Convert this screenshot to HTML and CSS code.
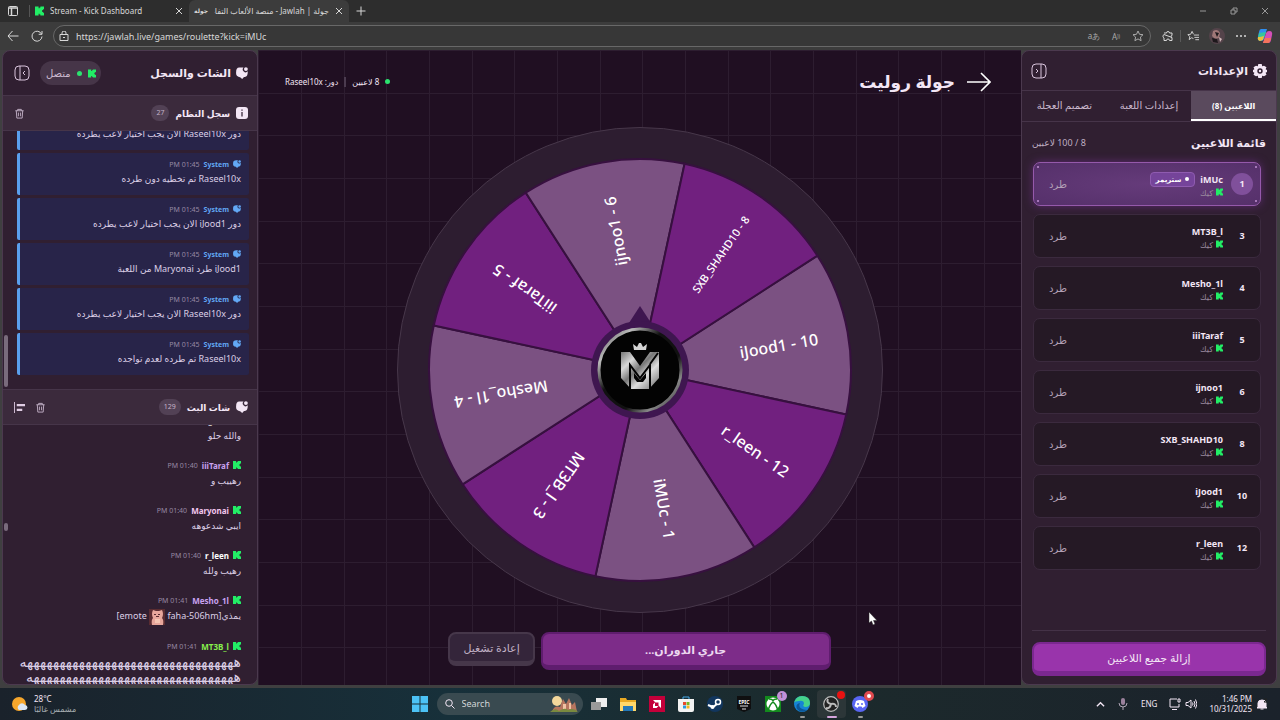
FILE: index.html
```html
<!DOCTYPE html>
<html lang="ar">
<head>
    <meta charset="UTF-8">
    <meta name="viewport" content="width=device-width, initial-scale=1.0">
    <title>جولة | Jawlah - منصة الألعاب التفاعلية</title>
    <link rel="stylesheet" href="styles.css">
</head>
<body>
    <!-- shared icons -->
    <svg class="sprite" aria-hidden="true">
        <symbol id="kick" viewBox="0 0 10 10"><path fill="currentColor" d="M0 0h4v2h1V1h1V0h4v3H9v1H8v2h1v1h1v3H6V9H5V8H4v2H0z"/></symbol>
        <symbol id="chat" viewBox="0 0 12 12"><path fill="currentColor" d="M7.500 .6A2.600 2.600 0 0 0 11.700 4.300C11.900 7 11.300 9.300 9.500 9.700C8.400 9.900 7.600 9.900 7 11.200Q6 12.500 5 11C4.500 10 3.600 10 2.400 9.700C.4 9.200 0 7.500 .1 5.200C.2 2 1 .8 3.300.6C4.700.4 5.800.4 7.500 .6z"/><circle cx="9.900" cy="2.100" r="1.900" fill="currentColor"/></symbol>
        <symbol id="trash" viewBox="0 0 12 12"><path fill="none" stroke="currentColor" d="M1.500 3h9M4 3V1.500h4V3M2.500 3l.6 8h5.800l.6-8M4.800 5v4M7.200 5v4"/></symbol>
        <symbol id="panel" viewBox="0 0 16 16"><rect x="1" y="1" width="14" height="14" rx="4" fill="none" stroke="currentColor"/><path d="M6 1v14M11 6L9 8l2 2" fill="none" stroke="currentColor"/></symbol>
        <symbol id="close" viewBox="0 0 8 8"><path d="M1 1l6 6M7 1L1 7" stroke="currentColor" fill="none"/></symbol>
        <symbol id="star" viewBox="0 0 12 12"><path fill="none" stroke="currentColor" stroke-linejoin="round" d="M6 1l1.500 3.300 3.500.4-2.600 2.400.7 3.600L6 8.900 2.900 10.700l.7-3.600L1 4.700l3.500-.4z"/></symbol>
    </svg>

    <header class="browser">
        <div class="tab-strip">
            <button class="icon-btn workspace" aria-label="Tab actions"><svg viewBox="0 0 12 12"><rect x="1.500" y="1.500" width="9" height="9" rx="1" fill="none" stroke="currentColor"/><path d="M1.500 3h9M4.500 3v7" stroke="currentColor" stroke-width="1.500"/></svg></button>
            <div class="tab">
                <svg class="favicon green"><use href="#kick"/></svg>
                <span class="tab-title">Stream - Kick Dashboard</span>
                <button class="tab-close" aria-label="Close tab"><svg><use href="#close"/></svg></button>
            </div>
            <div class="tab active">
                <span class="jawlah-icon">جولة</span>
                <span class="tab-title" dir="rtl">جولة | Jawlah - منصة الألعاب التفاعلية</span>
                <button class="tab-close" aria-label="Close tab"><svg><use href="#close"/></svg></button>
            </div>
            <button class="icon-btn" aria-label="New tab"><svg viewBox="0 0 12 12"><path d="M6 1.500v9M1.500 6h9" stroke="currentColor"/></svg></button>
            <div class="window-controls">
                <button aria-label="Minimize"><svg viewBox="0 0 8 8"><path d="M1 4h6" stroke="currentColor"/></svg></button>
                <button aria-label="Restore"><svg viewBox="0 0 8 8"><path d="M1 3h4v4H1zM3 3V1h4v4H5" fill="none" stroke="currentColor"/></svg></button>
                <button aria-label="Close"><svg><use href="#close"/></svg></button>
            </div>
        </div>
        <div class="toolbar">
            <button class="icon-btn" aria-label="Back"><svg viewBox="0 0 12 12"><path d="M11.500 6H1M5.500 1L1 6l4.500 5" fill="none" stroke="currentColor"/></svg></button>
            <button class="icon-btn" aria-label="Refresh"><svg viewBox="0 0 12 12"><path d="M10.500 4A5 5 0 1 0 11 6.500M11 1v3.300H7.700" fill="none" stroke="currentColor"/></svg></button>
            <div class="address">
                <svg class="lock" viewBox="0 0 10 10"><path d="M1 3.500h8V9.500H1zM3 3.500V2a2 2 0 0 1 4 0v1.500M4 6.500h2" fill="none" stroke="currentColor"/></svg>
                <input class="url" type="text" aria-label="Address" value="https://jawlah.live/games/roulette?kick=iMUc">
                <button class="icon-btn dim" aria-label="Translate">aあ</button>
                <button class="icon-btn dim" aria-label="Read aloud">A<sup>))</sup></button>
                <button class="icon-btn dim" aria-label="Favorite"><svg><use href="#star"/></svg></button>
            </div>
            <button class="icon-btn" aria-label="Extensions"><svg viewBox="0 0 12 12"><path d="M2 3h2.500a1.500 1.500 0 0 1 3 0H10v2.500M10 7.500V10.500H7.500a1.500 1.500 0 0 0-3 0H2V8a2 2 0 0 1 0-3.500zM10 5.500a1 1 0 0 0 0 2" fill="none" stroke="currentColor"/></svg></button>
            <span class="divider"></span>
            <button class="icon-btn" aria-label="Favorites"><svg viewBox="0 0 13 12"><path d="M7 8.800L5 7.900 2.400 9.900l.6-3.200L1 4.500l3-.4L5.500 1 7 4.100M7.500 5H13M8 7.500h5M9 10h4" fill="none" stroke="currentColor"/></svg></button>
            <button class="icon-btn" aria-label="Profile"><svg class="avatar" viewBox="0 0 16 16"><circle cx="8" cy="8" r="8" fill="#54434a"/><path d="M4 3q5-3 7 2l-1 5-4 1-3-3z" fill="#9f7777"/><path d="M6 4l4 1-2 4zM3 10l5 1 1 4-5-1z" fill="#1d171b"/><path d="M10 9l3 2-2 3z" fill="#d3b9bb"/></svg></button>
            <button class="icon-btn" aria-label="More"><svg viewBox="0 0 12 12"><circle cx="2" cy="6" r="1" fill="currentColor"/><circle cx="6" cy="6" r="1" fill="currentColor"/><circle cx="10" cy="6" r="1" fill="currentColor"/></svg></button>
            <button class="icon-btn" aria-label="Copilot"><svg class="copilot" viewBox="0 0 16 16"><path d="M4 1h6L7 11q-1 2-3 2Q0 13 1 9l1-5q.5-3 2-3z" fill="#2f8ff0"/><path d="M2 5l7-1-2 6-6 0z" fill="#35c5a0"/><path d="M3 9l4-1-1 4-3 1Q0 12 1 9z" fill="#e9c33c"/><path d="M12 15H6L9 5q1-2 3-2 4 0 3 4l-1 5q-.5 3-2 3z" fill="#d44fb8"/><path d="M8 10l6 0q-1 5-3 5H6z" fill="#f4735b"/></svg></button>
        </div>
    </header>

    <div class="app" dir="rtl">
        <aside class="panel settings">
            <div class="panel-header">
                <svg class="gear" viewBox="0 0 14 14"><path fill="currentColor" fill-rule="evenodd" d="M5.300 0h3.400l.5 2.200L11 1.700l2.500 1.500-.9 2L14 6v2l-1.400.8.9 2L11 12.300l-1.800-.5L8.700 14H5.300l-.5-2.200-1.800.5-2.500-1.500.9-2L0 8V6l1.400-.8-.9-2L3 1.700l1.800.5zM7 4.300a2.700 2.700 0 1 0 0 5.400 2.700 2.700 0 0 0 0-5.400z"/><circle cx="7" cy="7" r="1.200" fill="currentColor"/></svg>
                <h2>الإعدادات</h2>
                <button class="collapse flip" aria-label="إغلاق"><svg><use href="#panel"/></svg></button>
            </div>
            <nav class="tabs">
                <button class="selected">اللاعبين (8)</button>
                <button>إعدادات اللعبة</button>
                <button>تصميم العجلة</button>
            </nav>
            <div class="list-title">
                <h3>قائمة اللاعبين</h3>
                <span>8 / 100 لاعبين</span>
            </div>
            <ul class="players">
                <li class="player streamer">
                    <span class="number">1</span>
                    <div class="info">
                        <div class="name">iMUc <span class="badge">ستريمر</span></div>
                        <div class="source"><svg><use href="#kick"/></svg>كيك</div>
                    </div>
                    <button class="kick">طرد</button>
                </li>
                <li class="player">
                    <span class="number">3</span>
                    <div class="info">
                        <div class="name">MT3B_l</div>
                        <div class="source"><svg><use href="#kick"/></svg>كيك</div>
                    </div>
                    <button class="kick">طرد</button>
                </li>
                <li class="player">
                    <span class="number">4</span>
                    <div class="info">
                        <div class="name">Mesho_1l</div>
                        <div class="source"><svg><use href="#kick"/></svg>كيك</div>
                    </div>
                    <button class="kick">طرد</button>
                </li>
                <li class="player">
                    <span class="number">5</span>
                    <div class="info">
                        <div class="name">iiiTaraf</div>
                        <div class="source"><svg><use href="#kick"/></svg>كيك</div>
                    </div>
                    <button class="kick">طرد</button>
                </li>
                <li class="player">
                    <span class="number">6</span>
                    <div class="info">
                        <div class="name">ijnoo1</div>
                        <div class="source"><svg><use href="#kick"/></svg>كيك</div>
                    </div>
                    <button class="kick">طرد</button>
                </li>
                <li class="player">
                    <span class="number">8</span>
                    <div class="info">
                        <div class="name">SXB_SHAHD10</div>
                        <div class="source"><svg><use href="#kick"/></svg>كيك</div>
                    </div>
                    <button class="kick">طرد</button>
                </li>
                <li class="player">
                    <span class="number">10</span>
                    <div class="info">
                        <div class="name">iJood1</div>
                        <div class="source"><svg><use href="#kick"/></svg>كيك</div>
                    </div>
                    <button class="kick">طرد</button>
                </li>
                <li class="player">
                    <span class="number">12</span>
                    <div class="info">
                        <div class="name">r_leen</div>
                        <div class="source"><svg><use href="#kick"/></svg>كيك</div>
                    </div>
                    <button class="kick">طرد</button>
                </li>
            </ul>
            <div class="panel-footer">
                <button class="remove-all">إزالة جميع اللاعبين</button>
            </div>
        </aside>

        <main class="stage">
            <div class="stage-header">
                <a class="back" href="#" aria-label="رجوع"><svg viewBox="0 0 24 20"><path d="M0 10h23M14 1l9 9-9 9" fill="none" stroke="currentColor" stroke-width="1.600"/></svg></a>
                <h1>جولة روليت</h1>
                <div class="status">
                    <span class="dot"></span>
                    <span>8 لاعبين</span>
                    <span class="bar"></span>
                    <span>دور: Raseel10x</span>
                </div>
            </div>

            <svg class="wheel" viewBox="-243 -243 486 486" direction="ltr">
                <defs>
                    <linearGradient id="metal" x1="0" y1="0" x2="1" y2="1">
                        <stop offset="0" stop-color="#777"/>
                        <stop offset=".25" stop-color="#d8d8d8"/>
                        <stop offset=".45" stop-color="#777"/>
                        <stop offset=".65" stop-color="#ddd"/>
                        <stop offset="1" stop-color="#666"/>
                    </linearGradient>
                    <linearGradient id="rim" x1="0" y1="0" x2="1" y2="1">
                        <stop offset="0" stop-color="#444"/>
                        <stop offset=".2" stop-color="#bbb"/>
                        <stop offset=".4" stop-color="#111"/>
                        <stop offset=".65" stop-color="#111"/>
                        <stop offset=".8" stop-color="#888"/>
                        <stop offset="1" stop-color="#222"/>
                    </linearGradient>
                </defs>
                <circle class="ring" r="242.500"/>
                <g class="slices">
                    <path class="light" d="M0 0L177.400-114.300A211 211 0 0 1 206.200 44.600z"/>
                    <path class="dark" d="M0 0L206.200 44.600A211 211 0 0 1 114.300 177.400z"/>
                    <path class="light" d="M0 0L114.300 177.400A211 211 0 0 1-44.600 206.200z"/>
                    <path class="dark" d="M0 0L-44.600 206.200A211 211 0 0 1-177.400 114.300z"/>
                    <path class="light" d="M0 0L-177.400 114.300A211 211 0 0 1-206.200-44.600z"/>
                    <path class="dark" d="M0 0L-206.200-44.600A211 211 0 0 1-114.300-177.400z"/>
                    <path class="light" d="M0 0L-114.300-177.400A211 211 0 0 1 44.600-206.200z"/>
                    <path class="dark" d="M0 0L44.600-206.200A211 211 0 0 1 177.400-114.300z"/>
                </g>
                <g class="labels">
                    <text x="141" y="6" transform="rotate(-10)">iJood1 - 10</text>
                    <text x="141" y="6" transform="rotate(35)">r_leen - 12</text>
                    <text x="141" y="6" transform="rotate(80)">iMUc - 1</text>
                    <text x="141" y="6" transform="rotate(125)">MT3B_l - 3</text>
                    <text x="141" y="6" transform="rotate(170)">Mesho_1l - 4</text>
                    <text x="141" y="6" transform="rotate(215)">iiiTaraf - 5</text>
                    <text x="141" y="6" transform="rotate(260)">ijnoo1 - 6</text>
                    <text class="small" x="141" y="4" transform="rotate(305)">SXB_SHAHD10 - 8</text>
                </g>
                <path class="hub" d="M0-64L13-44H-13z"/>
                <circle class="hub" r="49"/>
                <circle r="41" fill="#030303" stroke="url(#rim)" stroke-width="3"/>
                <!-- crown, then the M with the U cut into it -->
                <path fill="#d5d5d5" d="M-6-20l-1-6 4 3 2-4h2l2 4 4-3-1 6z"/>
                <path fill="url(#metal)" d="M-19-18h9L0-4 10-18h9V8L9 19H-9L-19 8z"/>
                <path fill="none" stroke="#030303" stroke-width="2" d="M-10 19V-5L0 8 10-5V19M18-17L10-6"/>
                <path fill="#030303" d="M-6 3L0 10 6 3V8L3 12H-3L-6 8z"/>
            </svg>

            <div class="controls">
                <button class="spin">جاري الدوران...</button>
                <button class="restart">إعادة تشغيل</button>
            </div>
            <svg class="cursor" viewBox="0 0 9 13"><path d="M1 0v11l2.500-2 1.500 4 2-1-1.500-3.500H9z" fill="#fff" stroke="#222" stroke-width=".5"/></svg>
        </main>

        <aside class="panel chat">
            <div class="panel-header">
                <svg class="chat-icon"><use href="#chat"/></svg>
                <h2>الشات والسجل</h2>
                <div class="connected"><svg class="green"><use href="#kick"/></svg><span class="dot"></span>متصل</div>
                <button class="collapse" aria-label="إغلاق"><svg><use href="#panel"/></svg></button>
            </div>
            <div class="section-header">
                <svg class="info-icon" viewBox="0 0 12 12"><rect width="12" height="12" rx="3" fill="currentColor"/><path d="M6 5v4.500M6 2.500v1.300" stroke="#3b2a3c" stroke-width="1.300"/></svg>
                <h3>سجل النظام</h3>
                <span class="count">27</span>
                <button class="tool" aria-label="مسح السجل"><svg><use href="#trash"/></svg></button>
            </div>
            <div class="log">
                <div class="entry">
                    <div class="meta"><svg><use href="#chat"/></svg><b>System</b><time>01:45 PM</time></div>
                    <p>دور Raseel10x الان يجب اختيار لاعب يطرده</p>
                </div>
                <div class="entry">
                    <div class="meta"><svg><use href="#chat"/></svg><b>System</b><time>01:45 PM</time></div>
                    <p>Raseel10x تم تخطيه دون طرده</p>
                </div>
                <div class="entry">
                    <div class="meta"><svg><use href="#chat"/></svg><b>System</b><time>01:45 PM</time></div>
                    <p>دور iJood1 الان يجب اختيار لاعب يطرده</p>
                </div>
                <div class="entry">
                    <div class="meta"><svg><use href="#chat"/></svg><b>System</b><time>01:45 PM</time></div>
                    <p>iJood1 طرد Maryonai من اللعبة</p>
                </div>
                <div class="entry">
                    <div class="meta"><svg><use href="#chat"/></svg><b>System</b><time>01:45 PM</time></div>
                    <p>دور Raseel10x الان يجب اختيار لاعب يطرده</p>
                </div>
                <div class="entry">
                    <div class="meta"><svg><use href="#chat"/></svg><b>System</b><time>01:45 PM</time></div>
                    <p>Raseel10x تم طرده لعدم تواجده</p>
                </div>
                <span class="thumb"></span>
            </div>
            <div class="section-header stream-header">
                <svg class="chat-icon"><use href="#chat"/></svg>
                <h3>شات البث</h3>
                <span class="count">129</span>
                <button class="tool" aria-label="مسح الشات"><svg><use href="#trash"/></svg></button>
                <button class="tool last" aria-label="محاذاة"><svg viewBox="0 0 12 12"><path d="M.5 0v12" stroke="currentColor"/><path d="M3 3.500h9M3 8.500h6" stroke="currentColor" stroke-width="2.500"/></svg></button>
            </div>
            <div class="messages">
                <div class="message">
                    <div class="meta"><svg><use href="#kick"/></svg><b class="white">r_leen</b></div>
                    <p>والله حلو</p>
                </div>
                <div class="message">
                    <div class="meta"><svg><use href="#kick"/></svg><b class="violet">iiiTaraf</b><time>01:40 PM</time></div>
                    <p>رهييب و</p>
                </div>
                <div class="message">
                    <div class="meta"><svg><use href="#kick"/></svg><b class="pink">Maryonai</b><time>01:40 PM</time></div>
                    <p>ايبي شدعوهه</p>
                </div>
                <div class="message">
                    <div class="meta"><svg><use href="#kick"/></svg><b class="white">r_leen</b><time>01:40 PM</time></div>
                    <p>رهيب ولله</p>
                </div>
                <div class="message">
                    <div class="meta"><svg><use href="#kick"/></svg><b class="violet">Mesho_1l</b><time>01:41 PM</time></div>
                    <p>يمذي<bdi dir="ltr">faha-506hm]</bdi> <svg class="emote" viewBox="0 0 16 16"><rect width="16" height="16" fill="#5a2c31"/><path d="M3 16Q2 11 4 9 2 5 4 1l3 1h3l3-1q2 4 0 8 2 2 1 7z" fill="#e7a69b"/><path d="M5 5h2v1H5zM9 5h2v1H9zM7 7h3v1H7z" fill="#5a2c31"/><path d="M6 10h5v4H6z" fill="#f5c5b2"/></svg> <bdi dir="ltr">[emote</bdi></p>
                </div>
                <div class="message">
                    <div class="meta"><svg><use href="#kick"/></svg><b class="lime">MT3B_l</b><time>01:41 PM</time></div>
                    <p class="laugh">هههههههههههههههههههههههههههههههههه<br>ههههههههههههههههههههههههههههههههه</p>
                </div>
                <span class="thumb"></span>
            </div>
        </aside>
    </div>

    <footer class="taskbar">
        <div class="weather">
            <svg viewBox="0 0 16 16"><circle cx="7" cy="8" r="7" fill="#f5a62c"/><path d="M7 14a3 3 0 0 1 0-5 3.500 3.500 0 0 1 6 0 2.500 2.500 0 0 1 0 5z" fill="#dbe7f5"/></svg>
            <div><div>28°C</div><div class="sky">مشمس غالبًا</div></div>
        </div>
        <div class="dock">
            <button aria-label="Start"><svg viewBox="0 0 16 16"><path d="M0 0h7.500v7.500H0zM8.500 0H16v7.500H8.500zM0 8.500h7.500V16H0zM8.500 8.500H16V16H8.500z" fill="#4cc2f5"/></svg></button>
            <div class="search">
                <svg class="glass" viewBox="0 0 10 10"><circle cx="4" cy="4" r="3.300" fill="none" stroke="currentColor"/><path d="M6.500 6.500L9.500 9.500" stroke="currentColor"/></svg>
                <input type="text" aria-label="Search" placeholder="Search">
                <svg class="castle" viewBox="0 0 28 18"><circle cx="7" cy="6" r="5" fill="#f3d79b"/><path d="M2 17q2-7 8-5l3-8 3 5 3-6 3 7 3-3 2 10z" fill="#b6755f"/><path d="M13 9h3v5h-3zM19 8h2v6h-2z" fill="#f0c3a4"/><path d="M0 17q5-5 9-1 6-4 9-1 6-3 10 2z" fill="#7a8a3f"/></svg>
            </div>
            <button aria-label="Task view"><svg viewBox="0 0 16 16"><path d="M5 2h11v9H5z" fill="#eee"/><path d="M0 6h10v8H0z" fill="#9a9a9a"/></svg></button>
            <button aria-label="Files"><svg viewBox="0 0 16 16"><path d="M0 2h6l1 2h9v11H0z" fill="#e9a923"/><path d="M0 6h16v9H0z" fill="#ffd76a"/><path d="M3 10h10v5H3z" fill="#2478b8"/></svg></button>
            <button aria-label="AMD"><svg viewBox="0 0 16 16"><path d="M0 0h16v16H0z" fill="#c4003a"/><path d="M4 4h8v8L9.500 9.500v-3h-3zM4 12V8.500L6 6.500V10h3.500l-2 2z" fill="#fff"/></svg></button>
            <button aria-label="Store"><svg viewBox="0 0 16 16"><path d="M5 4V1h6v3" fill="none" stroke="#45a8e8"/><path d="M0 3h16v11q0 2-2 2H2q-2 0-2-2z" fill="#f3f3f3"/><path d="M5 6h3v3H5z" fill="#e84a2c"/><path d="M8.500 6h3v3h-3z" fill="#75b828"/><path d="M5 9.500h3v3H5z" fill="#2d9ae0"/><path d="M8.500 9.500h3v3h-3z" fill="#f5b822"/></svg></button>
            <button aria-label="Steam"><svg viewBox="0 0 16 16"><circle cx="8" cy="8" r="8" fill="#12365e"/><circle cx="11" cy="6" r="2.500" fill="none" stroke="#fff" stroke-width="1.500"/><path d="M1 9l5 2 4-3" stroke="#fff" stroke-width="2" fill="none"/><circle cx="5.500" cy="11" r="2" fill="#fff"/></svg></button>
            <button aria-label="Epic Games"><svg viewBox="0 0 16 16"><path d="M1 0h14v13l-7 3-7-3z" fill="#0f0f10"/><text x="8" y="8" class="epic">EPIC</text><path d="M4 10h8M6 13h4" stroke="#ddd"/></svg></button>
            <button class="badged" aria-label="Xbox"><svg viewBox="0 0 16 16"><path d="M0 0h16v16H0z" fill="#138a1d"/><circle cx="8" cy="8" r="6.500" fill="#fff"/><path d="M3.500 13Q5 8 8 6q3 2 4.500 7M4 3q3 0 4 1.500Q9 3 12 3" stroke="#138a1d" stroke-width="1.500" fill="none"/></svg><span class="bubble">1</span></button>
            <button class="running" aria-label="Edge"><svg viewBox="0 0 16 16"><circle cx="8" cy="8" r="8" fill="#1684d5"/><path d="M0 7Q2 0 8 0q8 0 8 7 0 4-5 4-3-1-1-3 0-4-5-3-4 0-5 2z" fill="#45d28b"/><path d="M6 7q-3 6 7 7-6 4-10-1Q1 8 6 7z" fill="#0d5799"/></svg></button>
            <button class="running focused badged" aria-label="OBS"><svg viewBox="0 0 16 16"><circle cx="8" cy="8" r="7.300" fill="#222" stroke="#bbb" stroke-width="1.200"/><path d="M8 8Q3 7 5 3M8 8q5-1 5 3M8 8q-1 5-5 4" fill="none" stroke="#bbb" stroke-width="2"/></svg><span class="bubble red"></span></button>
            <button class="running badged" aria-label="Discord"><svg viewBox="0 0 16 16"><circle cx="8" cy="8" r="8" fill="#5865f2"/><path d="M4 5q4-2 8 0l1.500 5-3 2-1-1.500h-3L5.500 12l-3-2z" fill="#fff"/><circle cx="6" cy="8" r="1" fill="#5865f2"/><circle cx="10" cy="8" r="1" fill="#5865f2"/></svg><span class="bubble ring-red"></span></button>
        </div>
        <div class="tray">
            <svg class="small" viewBox="0 0 10 10"><path d="M1 7l4-4 4 4" fill="none" stroke="currentColor" stroke-width="1.500"/></svg>
            <svg viewBox="0 0 12 12"><rect x="4" y="0" width="4" height="7" rx="2" fill="#9a819c"/><path d="M2 5q0 4 4 4t4-4M6 9v3" fill="none" stroke="#b0a5b5"/></svg>
            <span>ENG</span>
            <div class="tray-pair">
                <svg viewBox="0 0 12 12"><path d="M8 1H1v8h9V6M3 11.500h5M9 1h2v3H9z" fill="none" stroke="currentColor"/></svg>
                <svg viewBox="0 0 12 12"><path d="M1 4.500h2L6 2v8L3 7.500H1zM7.500 4.500q1 1.500 0 3M9 3q2 3 0 6M10.500 1.500q3 4.500 0 9" fill="none" stroke="currentColor"/></svg>
            </div>
            <div class="clock"><div>1:46 PM</div><div>10/31/2025</div></div>
            <svg viewBox="0 0 12 12"><path d="M2 9V5q0-3 4-3 4 0 4 3v4l1 1H1zM4.500 11h3" fill="currentColor" stroke="currentColor"/><path d="M8 1h3L8 4h3" fill="none" stroke="#222"/></svg>
        </div>
    </footer>
</body>
</html>
```

FILE: styles.css
```css
* {
    box-sizing: border-box;
}
body {
    margin: 0;
    height: 100vh;
    display: flex;
    flex-direction: column;
    overflow: hidden;
    font-family: "Noto Sans", "DejaVu Sans", sans-serif;
    font-size: 10px;
    color: #f3e6f5;
    background-color: #3c3c3c;
}
button, input {
    font: inherit;
    color: inherit;
    border: none;
    background: none;
    padding: 0;
    margin: 0;
}
h1, h2, h3, p, ul {
    margin: 0;
    padding: 0;
}
svg {
    display: block;
    flex: none;
}
.sprite {
    display: none;
}
.green {
    color: #22ee66;
}

/* browser */
.browser {
    color: #d8d8d8;
}
.tab-strip {
    display: flex;
    align-items: center;
    height: 22px;
    background-color: #2d2d2d;
}
.icon-btn {
    display: flex;
    align-items: center;
    justify-content: center;
    width: 24px;
    height: 22px;
    flex: none;
}
.icon-btn svg {
    width: 12px;
    height: 12px;
}
.workspace {
    width: 26px;
}
.tab {
    display: flex;
    align-items: center;
    width: 160px;
    height: 22px;
    padding: 0 6px 0 5px;
    gap: 6px;
    font-size: 8px;
}
.workspace + .tab {
    border-left: 1px solid #555;
    margin-left: 3px;
    height: 12px;
}
.tab.active {
    background-color: #3c3c3c;
    border-radius: 6px 6px 0 0;
}
.favicon {
    width: 9px;
    height: 10px;
}
.jawlah-icon {
    font-size: 6px;
    font-weight: bold;
}
.tab-title {
    flex: 1;
    overflow: hidden;
    white-space: nowrap;
    line-height: 16px;
}
.tab-close svg {
    width: 8px;
    height: 8px;
}
.window-controls {
    display: flex;
    margin-left: auto;
    color: #999;
}
.window-controls button {
    width: 31px;
    display: flex;
    justify-content: center;
}
.window-controls svg {
    width: 8px;
    height: 8px;
}
.toolbar {
    display: flex;
    align-items: center;
    height: 28px;
    padding: 0 3px 0 1px;
    background-color: #3c3c3c;
}
.address {
    flex: 1;
    display: flex;
    align-items: center;
    height: 22px;
    margin: 0 5px 0 4px;
    padding: 0 1px 0 5px;
    border: 1px solid #686868;
    border-radius: 11px;
    background-color: #373737;
}
.lock {
    width: 10px;
    height: 10px;
}
.url {
    flex: 1;
    margin-left: 7px;
    font-size: 9px;
    outline: none;
}
.address .icon-btn {
    width: 22px;
}
.dim {
    color: #aaa;
    font-size: 8px;
}
.dim sup {
    font-size: 5px;
}
.divider {
    width: 1px;
    height: 12px;
    background-color: #5a5a5a;
}
.icon-btn .avatar, .icon-btn .copilot {
    width: 16px;
    height: 16px;
}

/* app */
.app {
    flex: 1;
    min-height: 0;
    display: flex;
    padding: 0 3px 3px 2px;
    background-color: #3f3f40;
}
.panel {
    width: 20%;
    min-width: 256px;
    flex: none;
    display: flex;
    flex-direction: column;
    overflow: hidden;
    background-color: #301f31;
    border: 1px solid #4b394e;
    border-radius: 8px;
}
.panel-header {
    display: flex;
    align-items: center;
    height: 39px;
    padding: 0 9px;
    flex: none;
}
.panel-header h2 {
    font-size: 11px;
    line-height: 20px;
    margin-right: 5px;
}
.collapse {
    margin-right: auto;
    color: #d8c4dc;
}
.collapse svg {
    width: 16px;
    height: 16px;
}
.flip {
    transform: scaleX(-1);
}
.gear {
    width: 14px;
    height: 14px;
}

/* settings */
.tabs {
    display: grid;
    grid-template-columns: repeat(3, 1fr);
    height: 32px;
    flex: none;
    border-top: 1px solid #463449;
    border-bottom: 1px solid #463449;
    font-size: 10px;
    color: #c9b7cc;
}
.tabs button {
    padding-bottom: 2px;
}
.tabs .selected {
    padding: 0;
    color: #fff;
    font-size: 8px;
    font-weight: bold;
    background-color: #5a4a5d;
    border-bottom: 2px solid #fff;
}
.list-title {
    display: flex;
    align-items: center;
    justify-content: space-between;
    height: 40px;
    padding: 0 10px;
    flex: none;
}
.list-title h3 {
    font-size: 11px;
}
.list-title span {
    font-size: 9px;
    color: #bfaec2;
}
.players {
    flex: 1;
    min-height: 0;
    display: flex;
    flex-direction: column;
    gap: 8px;
    padding: 0 15px 0 11px;
    list-style: none;
}
.player {
    position: relative;
    display: flex;
    align-items: center;
    height: 44px;
    flex: none;
    padding: 0 7px 0 15px;
    border: 1px solid #3b2a3e;
    border-radius: 7px;
    background-color: #251925;
}
.number {
    width: 22px;
    line-height: 22px;
    text-align: center;
    font-weight: bold;
    font-size: 9px;
}
.info {
    margin-right: 8px;
}
.name {
    display: flex;
    align-items: center;
    gap: 5px;
    height: 16px;
    font-size: 9px;
    font-weight: bold;
}
.source {
    display: flex;
    align-items: center;
    gap: 3px;
    height: 10px;
    font-size: 8px;
    color: #9b8a9f;
}
.source svg {
    width: 7px;
    height: 8px;
    color: #22ee66;
}
.kick {
    margin-right: auto;
    font-size: 10px;
    color: #b3a1b7;
}
.streamer {
    border-color: #9559ab;
    background: radial-gradient(#653b7a, #55306a);
    box-shadow: 0 0 8px #5c2b70;
}
.streamer::before, .streamer::after {
    content: "";
    position: absolute;
    left: 3px;
    right: 3px;
    height: 2px;
    border: solid #a677b8;
    border-width: 0 2px;
}
.streamer::before {
    top: 3px;
}
.streamer::after {
    bottom: 3px;
}
.streamer .number {
    border-radius: 50%;
    background-color: #80509b;
}
.badge {
    display: flex;
    align-items: center;
    gap: 4px;
    height: 15px;
    padding: 0 5px;
    border: 1px solid #8f5bb0;
    border-radius: 4px;
    background-color: #75449a;
    font-size: 7px;
    color: #fff;
}
.badge::before {
    content: "";
    width: 4px;
    height: 4px;
    border-radius: 50%;
    background-color: #fff;
}
.panel-footer {
    margin: 0 10px;
    padding: 11px 0 8px;
    border-top: 1px solid #443247;
}
.remove-all {
    width: 100%;
    height: 34px;
    border: 2px solid #7b2890;
    border-bottom-width: 5px;
    border-radius: 8px;
    background-color: #9934ab;
    font-size: 11px;
}

/* stage */
.stage {
    position: relative;
    flex: 1;
    min-width: 0;
    display: flex;
    flex-direction: column;
    align-items: center;
    padding-bottom: 15px;
    background-color: #200f22;
    background-image:
        linear-gradient(#2d1d30 1px, transparent 1px),
        linear-gradient(#2d1d30 1px, transparent 1px),
        linear-gradient(#2d1d30 1px, transparent 1px),
        linear-gradient(90deg, #2d1d30 1px, transparent 1px),
        linear-gradient(90deg, #2d1d30 1px, transparent 1px),
        linear-gradient(90deg, #2d1d30 1px, transparent 1px);
    background-size: 128px 128px;
    background-position: 0 0, 0 43px, 0 85px, 0 0, 43px 0, 86px 0;
}
.stage-header {
    display: flex;
    align-items: center;
    width: 100%;
    height: 63px;
    padding: 0 30px 0 27px;
    margin-bottom: 14px;
}
.back svg {
    width: 24px;
    height: 20px;
}
.back {
    color: #fff;
}
.stage h1 {
    margin-right: 12px;
    font-size: 17px;
    line-height: 28px;
}
.status {
    display: flex;
    align-items: center;
    gap: 6px;
    margin-right: auto;
    font-size: 8px;
}
.dot {
    width: 5px;
    height: 5px;
    border-radius: 50%;
    background-color: #2be36f;
}
.bar {
    width: 2px;
    height: 10px;
    background-color: #4b3b4f;
}
.wheel {
    flex: 1;
    min-height: 0;
    max-width: 100%;
    direction: ltr;
}
.ring {
    fill: #2d1d30;
    stroke: #47374a;
}
.slices {
    stroke: #37103f;
    stroke-width: 2;
}
.light {
    fill: #7b5182;
}
.dark {
    fill: #71207f;
}
.labels {
    fill: #fff;
    font-size: 16px;
    font-weight: 500;
    text-anchor: middle;
}
.labels .small {
    font-size: 11px;
}
.hub {
    fill: #3f1650;
}
.controls {
    display: flex;
    align-items: flex-start;
    justify-content: center;
    gap: 6px;
    width: 100%;
    margin-top: 19px;
}
.spin {
    width: 38%;
    height: 38px;
    border: 2px solid #5f1d6e;
    border-bottom-width: 5px;
    border-radius: 8px;
    background-color: #7d2c89;
    font-size: 11px;
    font-weight: bold;
    color: #ecd7ef;
}
.restart {
    height: 34px;
    padding: 0 13px;
    border: 2px solid #46374a;
    border-bottom-width: 5px;
    border-radius: 8px;
    background-color: #34253a;
    font-size: 11px;
    color: #c0b0c4;
}
.cursor {
    position: absolute;
    left: 80%;
    bottom: 60px;
    width: 9px;
    height: 13px;
}

/* chat */
.chat-icon, .info-icon {
    width: 12px;
    height: 12px;
}
.connected {
    display: flex;
    align-items: center;
    gap: 6px;
    height: 24px;
    margin-right: auto;
    padding: 0 5px 0 6px;
    border-radius: 12px;
    background-color: #463548;
    font-size: 10px;
    color: #cbb9ce;
}
.connected svg {
    width: 8px;
    height: 9px;
}
.connected + .collapse {
    margin-right: 10px;
}
.section-header {
    display: flex;
    align-items: center;
    height: 36px;
    flex: none;
    padding: 0 9px 0 11px;
    border-top: 1px solid #463549;
    border-bottom: 1px solid #463549;
    background-color: #3b2a3c;
}
.chat .panel-header {
    height: 44px;
    padding-left: 11px;
}
.section-header h3 {
    font-size: 9px;
    margin-right: 6px;
}
.count {
    margin-right: 6px;
    padding: 0 5px;
    border-radius: 8px;
    background-color: #524155;
    font-size: 7px;
    line-height: 16px;
    color: #c4b2c8;
}
.tool {
    margin-right: auto;
    color: #c4b2c8;
}
.tool svg {
    width: 11px;
    height: 11px;
}
.tool.last {
    margin-right: 10px;
    color: #e0cde4;
}
.log {
    position: relative;
    flex: 244;
    min-height: 0;
    display: flex;
    flex-direction: column;
    justify-content: flex-end;
    gap: 3px;
    padding: 0 8px 14px 14px;
    overflow: hidden;
}
.entry {
    height: 42px;
    flex: none;
    padding: 4px 8px;
    border-left: 3px solid #5aa0ee;
    border-radius: 2px;
    background-color: #282449;
}
.meta {
    display: flex;
    align-items: center;
    gap: 4px;
    height: 14px;
    font-size: 7px;
}
.meta svg {
    width: 8px;
    height: 8px;
}
.meta time {
    color: #9788a3;
}
.entry .meta svg, .entry b {
    color: #62a8f5;
}
.entry p, .message p {
    font-size: 9px;
    line-height: 16px;
    white-space: nowrap;
    color: #dccfe6;
}
.messages {
    position: relative;
    flex: 259;
    min-height: 0;
    display: flex;
    flex-direction: column;
    justify-content: flex-end;
    gap: 13px;
    padding: 0 16px;
    overflow: hidden;
}
.message {
    flex: none;
}
.message .meta {
    height: 16px;
}
.message .meta svg {
    color: #22ee66;
}
.message b {
    font-size: 8px;
}
.message .laugh {
    font-size: 14px;
    line-height: 15px;
}
.white {
    color: #fff;
}
.violet {
    color: #c9a2f0;
}
.pink {
    color: #f3c8ee;
}
.lime {
    color: #86f04c;
}
.emote {
    display: inline-block;
    width: 16px;
    height: 16px;
    vertical-align: middle;
}
.thumb {
    position: absolute;
    left: 1px;
    bottom: 2px;
    width: 4px;
    height: 52px;
    border-radius: 2px;
    background-color: #796b7c;
}
.messages .thumb {
    bottom: 59%;
    height: 8px;
}

/* taskbar */
.taskbar {
    display: grid;
    grid-template-columns: 1fr auto 1fr;
    align-items: center;
    height: 32px;
    flex: none;
    padding: 0 12px;
    background: linear-gradient(90deg, #1a222b, #17303a 35%, #1c2a2c 65%, #1b222b);
    font-size: 8px;
    line-height: 10px;
}
.weather {
    display: flex;
    align-items: center;
    gap: 6px;
}
.weather svg {
    width: 16px;
    height: 16px;
}
.sky {
    color: #a9b0b4;
}
.dock {
    display: flex;
    align-items: center;
}
.dock button {
    position: relative;
    width: 29px;
    height: 28px;
    border-radius: 4px;
}
.dock button svg {
    width: 16px;
    height: 16px;
    margin: 0 auto;
}
.search {
    display: flex;
    align-items: center;
    width: 146px;
    height: 22px;
    margin: 0 2px;
    padding: 0 5px 0 8px;
    gap: 7px;
    border-radius: 11px;
    background-color: #394a50;
    font-size: 9px;
}
.search input {
    flex: 1;
    min-width: 0;
    outline: none;
}
.search input::placeholder {
    color: #d3d7d8;
    opacity: 1;
}
.glass {
    width: 10px;
    height: 10px;
}
.castle {
    width: 28px;
    height: 18px;
}
.running::after {
    content: "";
    position: absolute;
    left: 12px;
    bottom: 0;
    width: 5px;
    height: 2px;
    border-radius: 1px;
    background-color: #999;
}
.dock .focused {
    background-color: #2c3638;
}
.focused::after {
    left: 10px;
    width: 10px;
    background-color: #d5a5dd;
}
.bubble {
    position: absolute;
    top: 1px;
    right: 1px;
    width: 10px;
    height: 10px;
    border-radius: 50%;
    background-color: #c390d8;
    color: #222;
    font-size: 7px;
}
.red {
    width: 8px;
    height: 8px;
    background-color: #e81212;
}
.ring-red {
    border: 3px solid #e04a4f;
    background-color: #fff;
}
.epic {
    fill: #fff;
    font-size: 5px;
    font-weight: bold;
    text-anchor: middle;
}
.tray {
    display: flex;
    align-items: center;
    justify-content: flex-end;
    gap: 12px;
}
.tray svg {
    width: 12px;
    height: 12px;
}
.tray .small {
    width: 9px;
    height: 9px;
}
.tray-pair {
    display: flex;
    gap: 4px;
}
.clock {
    text-align: right;
}
.clock + svg {
    margin-left: -8px;
}
```
